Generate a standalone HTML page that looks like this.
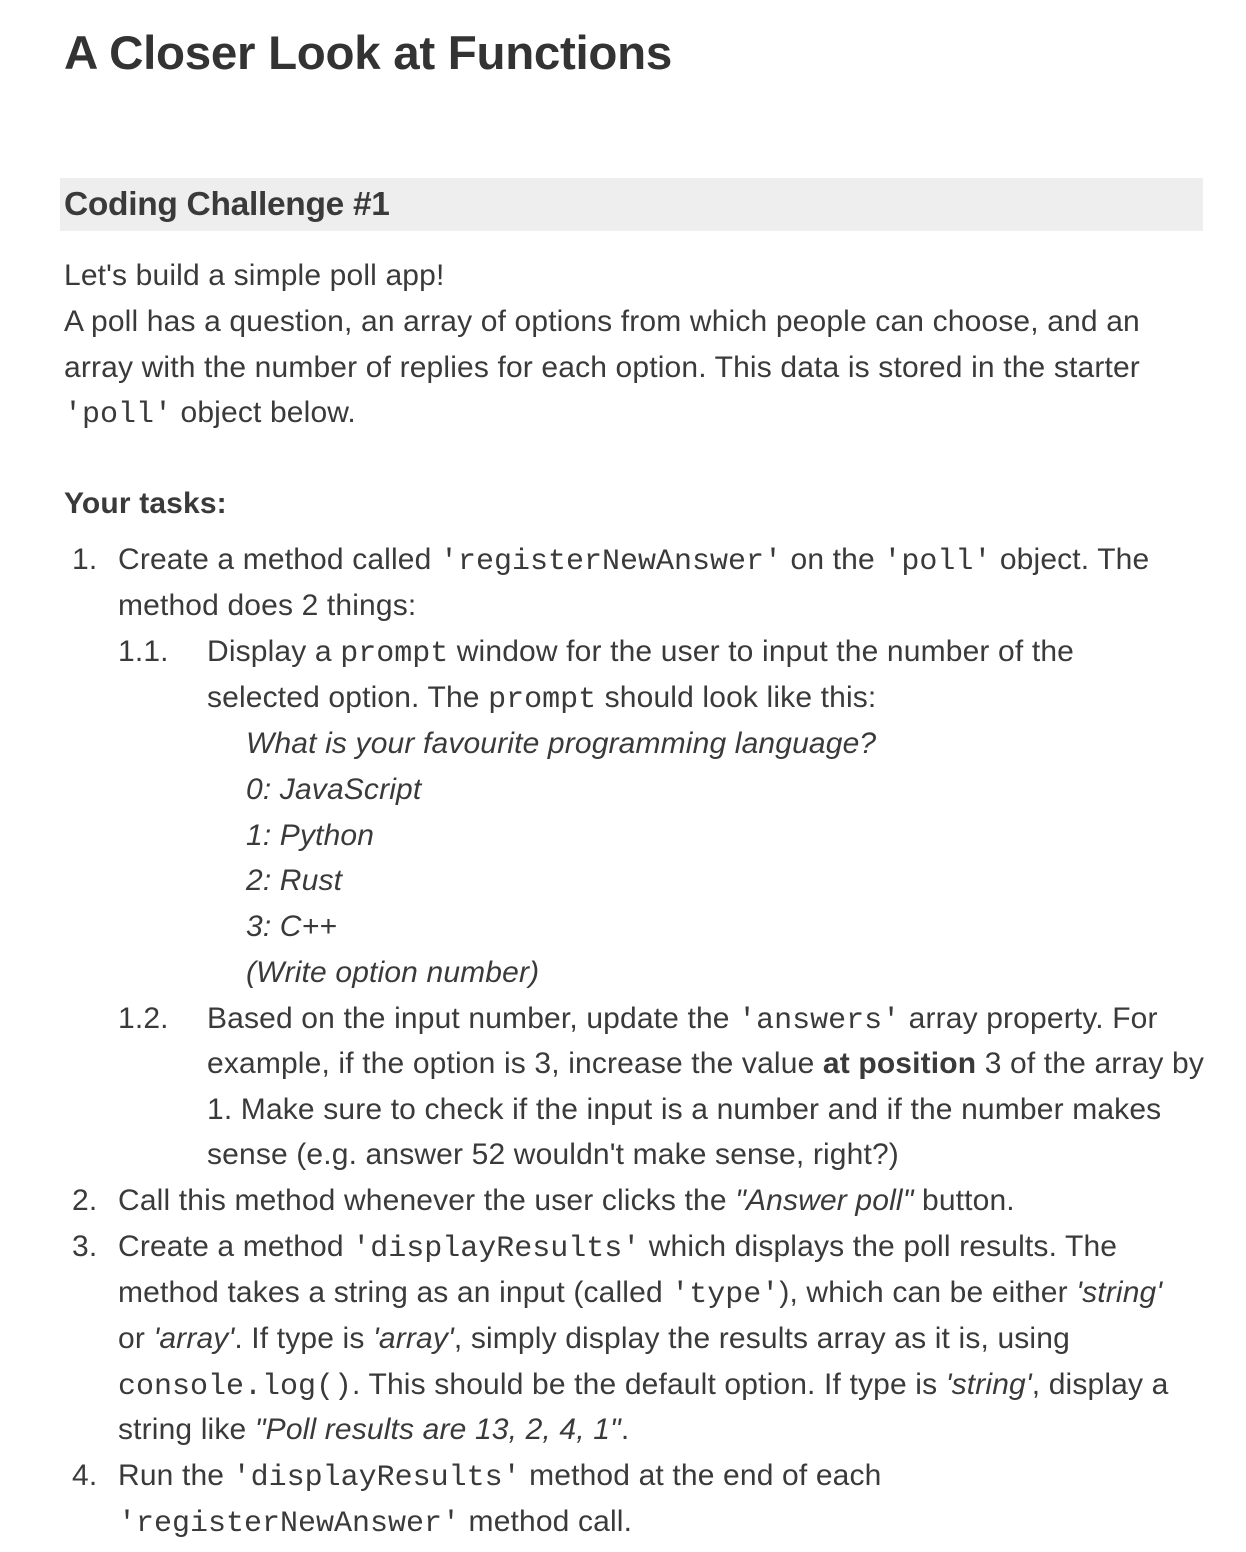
<!DOCTYPE html>
<html><head><meta charset="utf-8"><style>
body{margin:0;width:1246px;height:1552px;background:#fff;position:relative;font-family:"Liberation Sans",Arial,sans-serif;color:#3a3a3a;overflow:hidden}
.l{position:absolute;white-space:nowrap;font-size:30px;line-height:46px;height:46px;letter-spacing:0.15px;margin-top:1px}
code{font-family:"Liberation Mono",monospace;font-size:30px;letter-spacing:0}
h1{position:absolute;left:64px;top:22px;margin:0;font-size:47.5px;line-height:64px;font-weight:bold;color:#333;letter-spacing:-0.3px}
.hd{position:absolute;left:60px;top:178px;width:1143px;height:53px;background:#eeeeee}
.hd span{position:absolute;left:4px;top:0;line-height:53px;font-size:33.5px;font-weight:bold;color:#3a3a3a;letter-spacing:-0.3px}
i{font-style:italic}
</style></head><body>
<h1>A Closer Look at Functions</h1>
<div class="hd"><span>Coding Challenge #1</span></div>
<div class="l" style="left:64px;top:252px">Let's build a simple poll app!</div>
<div class="l" style="left:64px;top:298px">A poll has a question, an array of options from which people can choose, and an</div>
<div class="l" style="left:64px;top:344px">array with the number of replies for each option. This data is stored in the starter</div>
<div class="l" style="left:64px;top:389px"><code>'poll'</code> object below.</div>
<div class="l" style="left:64px;top:480px;font-weight:bold">Your tasks:</div>
<div class="l" style="left:72px;top:536px">1.</div>
<div class="l" style="left:118px;top:536px">Create a method called <code>'registerNewAnswer'</code> on the <code>'poll'</code> object. The</div>
<div class="l" style="left:118px;top:582px">method does 2 things:</div>
<div class="l" style="left:118px;top:628px">1.1.</div>
<div class="l" style="left:207px;top:628px">Display a <code>prompt</code> window for the user to input the number of the</div>
<div class="l" style="left:207px;top:674px">selected option. The <code>prompt</code> should look like this:</div>
<div class="l" style="left:246px;top:720px"><i>What is your favourite programming language?</i></div>
<div class="l" style="left:246px;top:766px"><i>0: JavaScript</i></div>
<div class="l" style="left:246px;top:812px"><i>1: Python</i></div>
<div class="l" style="left:246px;top:857px"><i>2: Rust</i></div>
<div class="l" style="left:246px;top:903px"><i>3: C++</i></div>
<div class="l" style="left:246px;top:949px"><i>(Write option number)</i></div>
<div class="l" style="left:118px;top:995px">1.2.</div>
<div class="l" style="left:207px;top:995px">Based on the input number, update the <code>'answers'</code> array property. For</div>
<div class="l" style="left:207px;top:1040px">example, if the option is 3, increase the value <b>at position</b> 3 of the array by</div>
<div class="l" style="left:207px;top:1086px">1. Make sure to check if the input is a number and if the number makes</div>
<div class="l" style="left:207px;top:1131px">sense (e.g. answer 52 wouldn't make sense, right?)</div>
<div class="l" style="left:72px;top:1177px">2.</div>
<div class="l" style="left:118px;top:1177px">Call this method whenever the user clicks the <i>"Answer poll"</i> button.</div>
<div class="l" style="left:72px;top:1223px">3.</div>
<div class="l" style="left:118px;top:1223px">Create a method <code>'displayResults'</code> which displays the poll results. The</div>
<div class="l" style="left:118px;top:1269px">method takes a string as an input (called <code>'type'</code>), which can be either <i>'string'</i></div>
<div class="l" style="left:118px;top:1315px">or <i>'array'</i>. If type is <i>'array'</i>, simply display the results array as it is, using</div>
<div class="l" style="left:118px;top:1361px"><code>console.log()</code>. This should be the default option. If type is <i>'string'</i>, display a</div>
<div class="l" style="left:118px;top:1406px">string like <i>"Poll results are 13, 2, 4, 1"</i>.</div>
<div class="l" style="left:72px;top:1452px">4.</div>
<div class="l" style="left:118px;top:1452px">Run the <code>'displayResults'</code> method at the end of each</div>
<div class="l" style="left:118px;top:1498px"><code>'registerNewAnswer'</code> method call.</div>
</body></html>
